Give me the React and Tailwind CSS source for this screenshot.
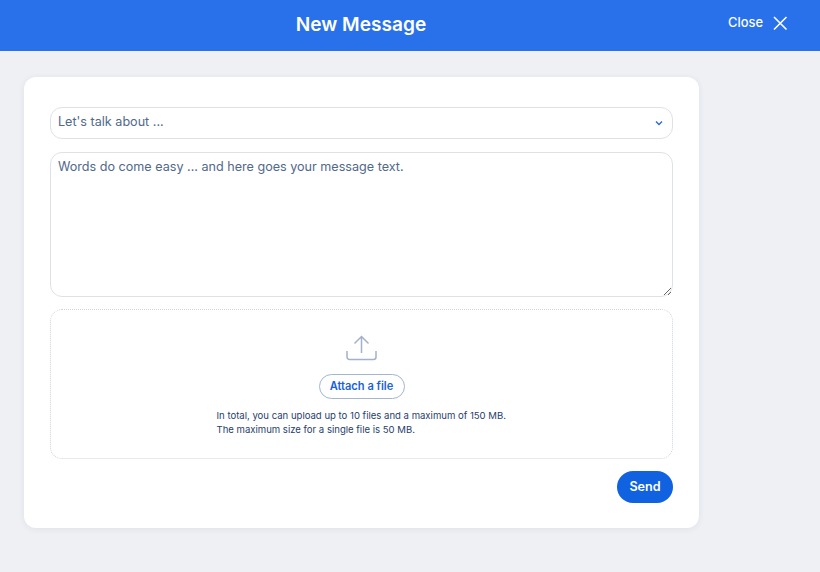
import React from "react";

export default function App() {
  return (
    <div className="w-[820px] h-[572px] overflow-hidden bg-[#eef0f4] font-['Inter',sans-serif] flex flex-col">
      <header className="relative h-[51px] shrink-0 bg-[#2871ea] flex items-center justify-center text-white">
        <h1 className="text-[19.1px] font-semibold leading-[28px] pb-[4px] translate-x-[-49px]">New Message</h1>
        <button className="absolute right-[32px] top-0 h-[46px] flex items-center gap-[9px] text-[12.9px] font-medium text-white">
          Close
          <svg width="16" height="16" viewBox="0 0 16 16" fill="none" stroke="white" strokeWidth="1.6">
            <path d="M2 2 L14.5 14.5 M14.5 2 L2 14.5" />
          </svg>
        </button>
      </header>
      <main className="pt-[26px] pl-[24px]">
        <div className="w-[675px] h-[451px] bg-white rounded-[12px] shadow-[0_1px_6px_rgba(30,50,90,0.08)] pt-[30px] px-[26px] flex flex-col">
          <div className="h-[32px] rounded-[12px] border-[1.5px] border-[#dfe1e6] flex items-center justify-between pl-[7px] pr-[8px] text-[12.6px] text-[#51698a]">
            <span className="pb-[2px]">Let's talk about ...</span>
            <svg width="10" height="10" viewBox="0 0 10 10" fill="none" stroke="#2f6ad0" strokeWidth="1.4">
              <path d="M2 3.5 L5 6.5 L8 3.5" />
            </svg>
          </div>
          <textarea
            readOnly
            placeholder="Words do come easy ... and here goes your message text."
            className="mt-[13px] h-[145px] w-full rounded-[12px] border-[1.5px] border-[#dfe1e6] px-[7px] py-[4px] text-[12.6px] leading-[20px] text-[#51698a] placeholder:text-[#51698a] outline-none"
          />
          <div className="mt-[12px] h-[150px] rounded-[12px] border border-dotted border-[#cfd3da] flex flex-col items-center pt-[25px]">
            <svg width="32" height="26" viewBox="0 0 32 26" fill="none" stroke="#a3b2c9" strokeWidth="1.5">
              <path d="M15.5 18 V2 M8.5 8.5 L15.5 1.5 L22.5 8.5" />
              <path d="M1 16 V22 a2.5 2.5 0 0 0 2.5 2.5 H27.5 a2.5 2.5 0 0 0 2.5 -2.5 V16" />
            </svg>
            <button className="mt-[13px] h-[25px] w-[86px] rounded-full border-[1.5px] border-[#a3b5cf] text-[11.1px] font-semibold text-[#1a62d6]">
              Attach a file
            </button>
            <p className="mt-[10px] text-[9.55px] leading-[14px] text-[#27406b] w-[300px] pl-[5px]">
              In total, you can upload up to 10 files and a maximum of 150 MB.
              <br />
              The maximum size for a single file is 50 MB.
            </p>
          </div>
          <div className="mt-[12px] flex justify-end">
            <button className="h-[32px] w-[56px] rounded-full bg-[#1162e0] text-white text-[12.6px] font-semibold">Send</button>
          </div>
        </div>
      </main>
    </div>
  );
}
